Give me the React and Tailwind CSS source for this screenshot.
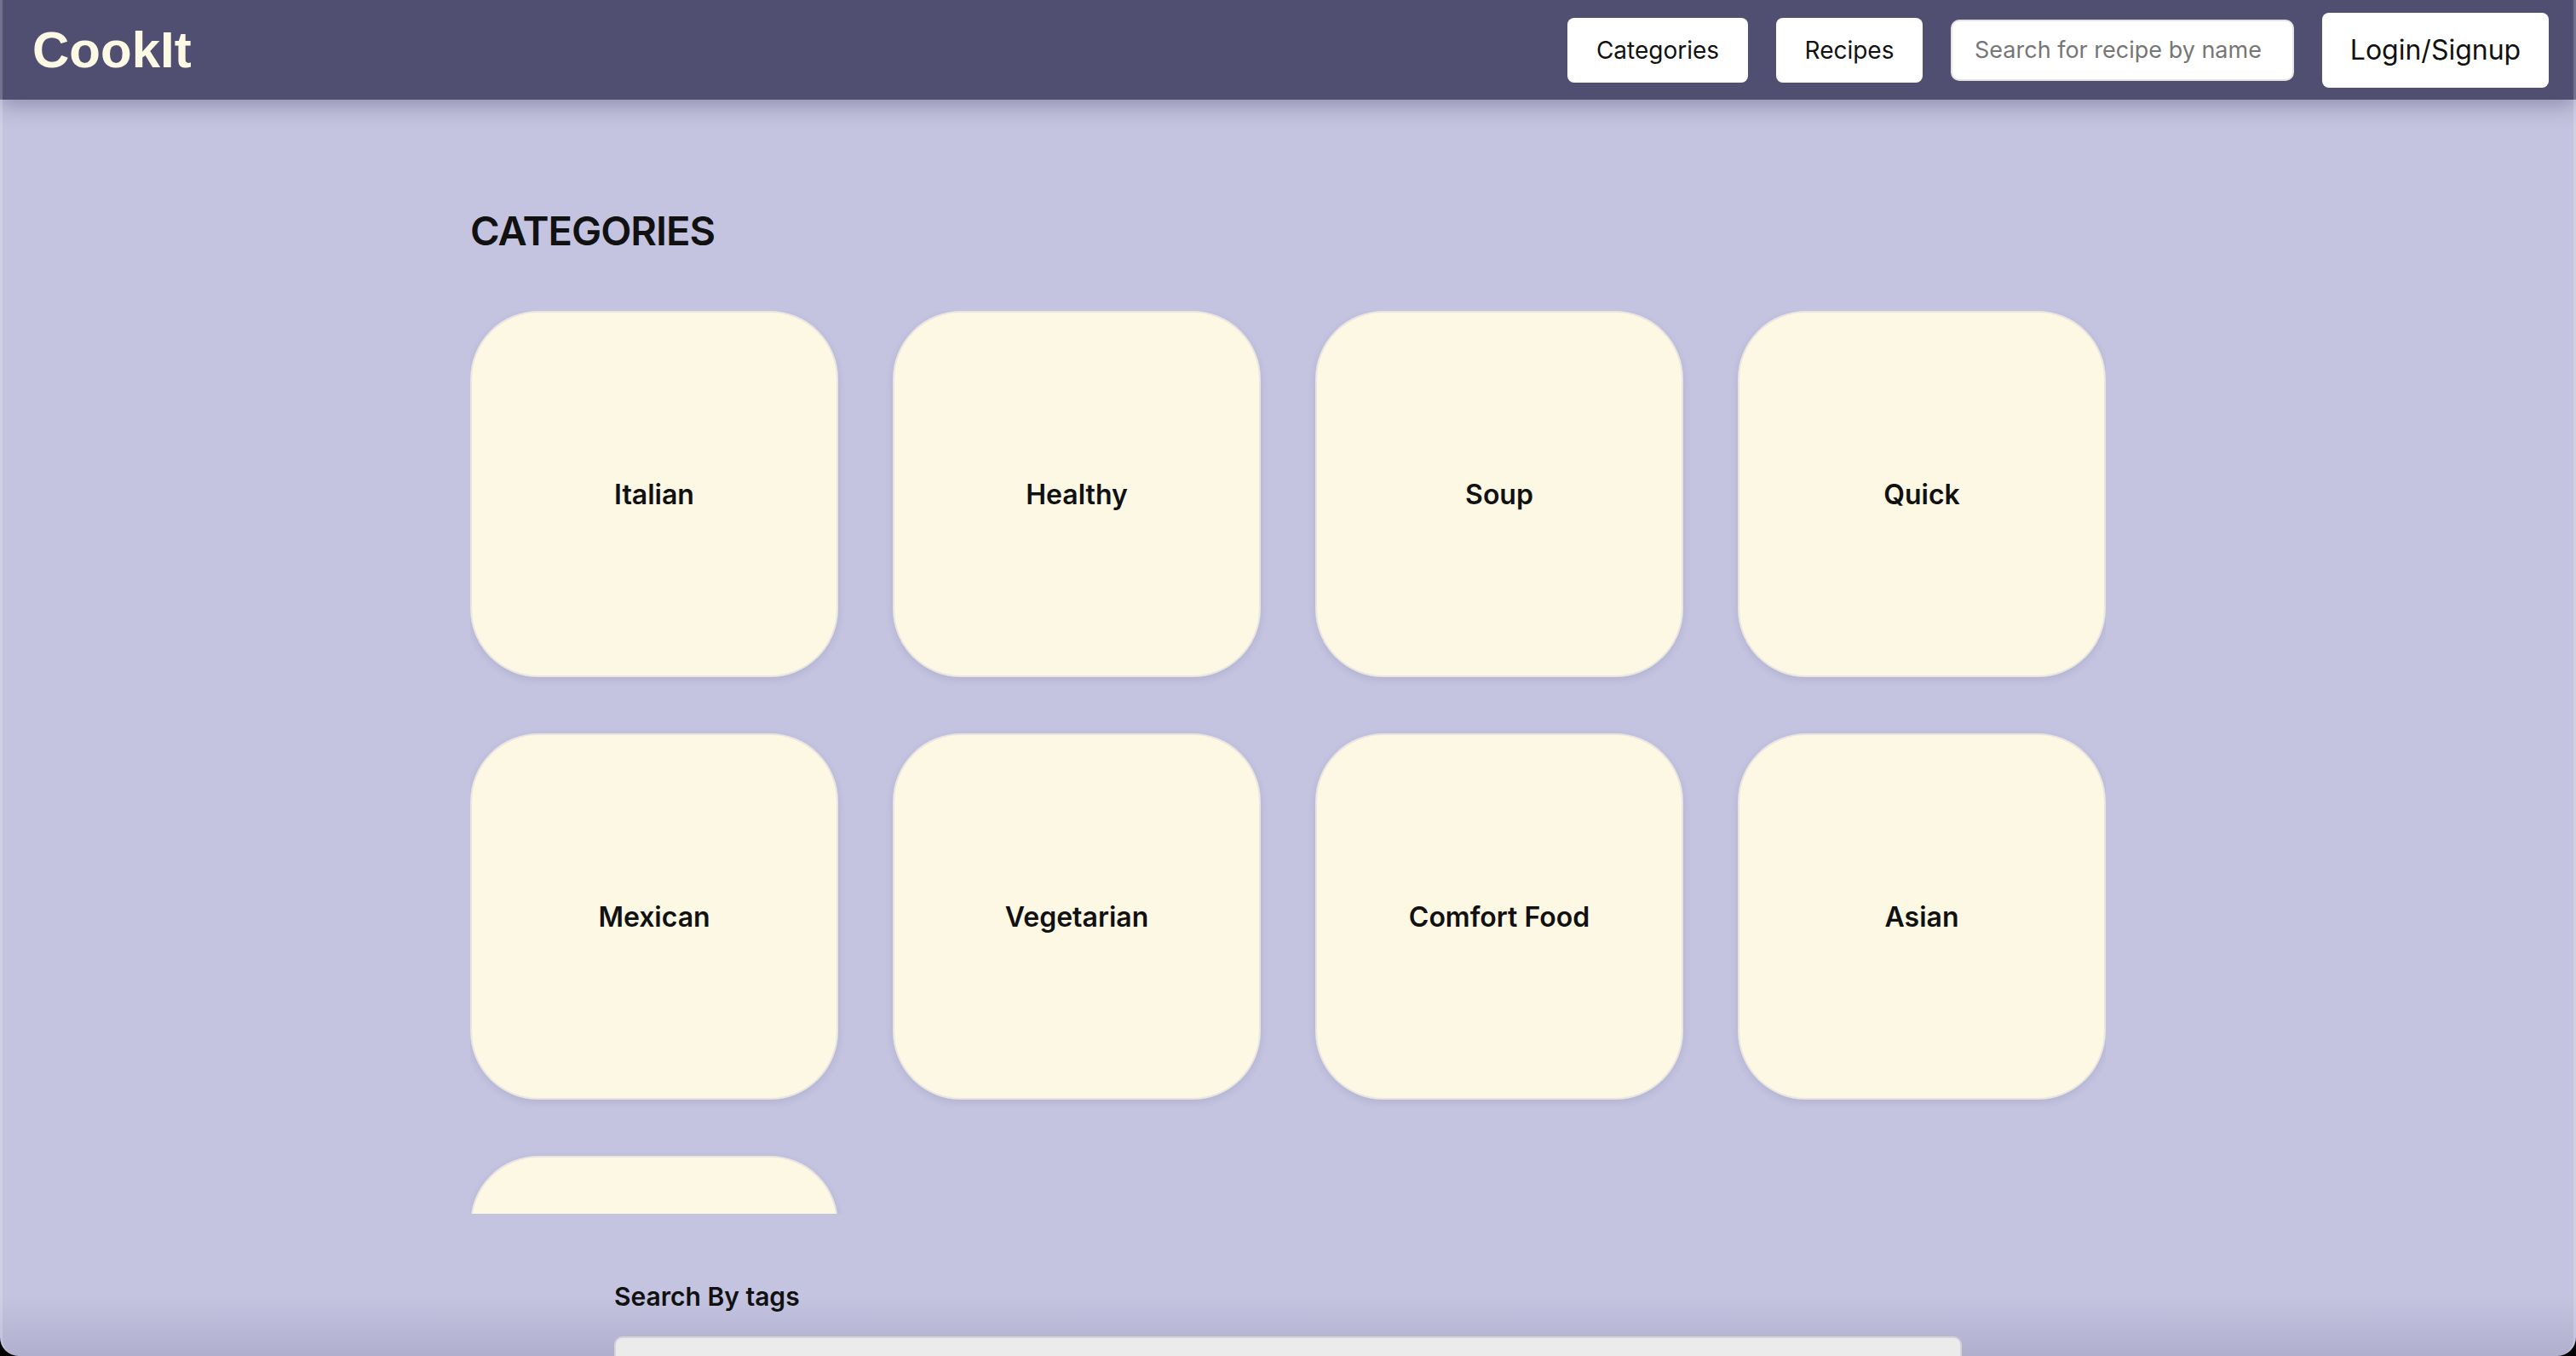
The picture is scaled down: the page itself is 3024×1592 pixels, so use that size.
import { useState } from "react";

const CATEGORIES = [
  "Italian",
  "Healthy",
  "Soup",
  "Quick",
  "Mexican",
  "Vegetarian",
  "Comfort Food",
  "Asian",
  "Dessert",
];

function NavBar() {
  const [query, setQuery] = useState("");

  return (
    <header className="relative z-10 flex h-[117px] items-center justify-between bg-[#504f72] pl-[38px] pr-[32px] shadow-[0_6px_24px_rgba(40,40,70,0.35)]">
      <h1 className="font-['Liberation_Sans',Arial,sans-serif] text-[60px] font-bold leading-none text-[#fdf9e4]">
        CookIt
      </h1>

      <nav className="flex items-center gap-[33px]">
        <button className="h-[76px] w-[212px] rounded-[8px] bg-white text-[28px] text-[#111]">
          Categories
        </button>
        <button className="h-[76px] w-[172px] rounded-[8px] bg-white text-[28px] text-[#111]">
          Recipes
        </button>
        <input
          value={query}
          onChange={(e) => setQuery(e.target.value)}
          placeholder="Search for recipe by name"
          className="h-[72px] w-[403px] rounded-[10px] border-2 border-[#e4e4e4] bg-white px-[26px] text-[27px] text-[#111] outline-none placeholder:text-[#767676]"
        />
        <button className="h-[88px] w-[266px] rounded-[8px] bg-white text-[32px] text-[#111]">
          Login/Signup
        </button>
      </nav>
    </header>
  );
}

function CategoryCard({ name }) {
  return (
    <div className="flex h-[430px] w-[432px] items-center justify-center rounded-[80px] border-2 border-[#e9e6e1] bg-[#fdf8e4] pt-[2px] shadow-[0_3px_8px_rgba(60,60,100,0.12)]">
      <span className="text-[32px] font-semibold leading-none text-[#111]">{name}</span>
    </div>
  );
}

export default function App() {
  const [tags, setTags] = useState("");

  return (
    <div className="bg-black font-['Inter','Noto_Sans',sans-serif]">
      <div className="relative h-[1592px] overflow-hidden rounded-b-[22px] bg-[#c4c3e0]">
        <NavBar />

        <main className="mx-auto w-[1920px] pt-[130px]">
          <h2 className="text-[47px] font-semibold leading-none tracking-[-1px] text-[#111]">CATEGORIES</h2>

          {/* scrollable category grid */}
          <div className="mt-[71px] h-[1060px] overflow-hidden">
            <div className="grid grid-cols-4 gap-x-[64px] gap-y-[66px]">
              {CATEGORIES.map((c) => (
                <CategoryCard key={c} name={c} />
              ))}
            </div>
          </div>
        </main>

        {/* bottom shade */}
        <div className="pointer-events-none absolute bottom-0 left-0 right-0 h-[70px] bg-gradient-to-t from-[rgba(40,40,80,0.13)] to-transparent" />

        <section className="relative z-10 mx-auto mt-[82px] w-[1582px]">
          <p className="text-[30px] font-semibold leading-none text-[#111]">Search By tags</p>
          <input
            value={tags}
            onChange={(e) => setTags(e.target.value)}
            className="mt-[32px] h-[80px] w-full rounded-[10px] border-2 border-[#d6d6d6] bg-[#ebebeb] px-[24px] text-[28px] outline-none"
          />
        </section>

        <div className="pointer-events-none absolute inset-0 z-20 rounded-b-[22px] border-x-[3px] border-white/20" />
      </div>
    </div>
  );
}
